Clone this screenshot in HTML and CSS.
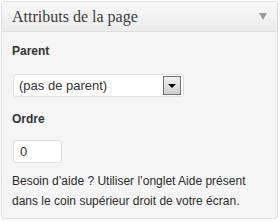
FILE: index.html
```html
<!DOCTYPE html>
<html lang="fr">
<head>
    <meta charset="UTF-8">
    <title>Attributs de la page</title>
    <link rel="stylesheet" href="styles.css">
</head>
<body>
    <div class="postbox">
        <div class="postbox-header">
            <h3 class="postbox-title">Attributs de la page</h3>
            <span class="toggle-arrow"></span>
        </div>
        <div class="inside">
            <p class="field-label">Parent</p>
            <div class="select-box">
                <span class="select-value">(pas de parent)</span>
                <span class="select-button"><span class="select-caret"></span></span>
            </div>
            <p class="field-label">Ordre</p>
            <input class="order-input" type="text" value="0">
            <p class="help-text">Besoin d&#8217;aide ? Utiliser l&#8217;onglet Aide présent dans le coin supérieur droit de votre écran.</p>
        </div>
    </div>
</body>
</html>
```
FILE: styles.css
```css
body {
    margin: 0;
    padding: 1px;
    background: #ffffff;
    font-family: 'Liberation Sans', Arial, sans-serif;
    font-size: 12px;
    color: #333333;
}

.postbox {
    width: 277px;
    height: 218px;
    box-sizing: border-box;
    border: 1px solid #dfdfdf;
    border-radius: 3px;
    background: #f5f5f5;
}

.postbox-header {
    display: flex;
    align-items: center;
    justify-content: space-between;
    height: 29px;
    padding: 0 10px;
    border-bottom: 1px solid #dfdfdf;
    background: linear-gradient(to bottom, #f9f9f9, #ececec);
}

.postbox-title {
    margin: 0;
    font-family: 'Liberation Serif', 'Times New Roman', serif;
    font-weight: normal;
    font-size: 16px;
    color: #3a3a3a;
}

.toggle-arrow {
    width: 0;
    height: 0;
    border-left: 4px solid transparent;
    border-right: 4px solid transparent;
    border-top: 7px solid #9a9a9a;
}

.inside {
    padding: 9px 10px 0 10px;
}

.field-label {
    margin: 0;
    line-height: 20px;
    font-weight: bold;
    color: #333333;
}

.select-box {
    display: flex;
    align-items: center;
    justify-content: space-between;
    width: 171px;
    height: 23px;
    margin: 13px 0 12px 1px;
    padding: 0 2px 0 5px;
    box-sizing: border-box;
    border: 1px solid #dfdfdf;
    border-radius: 3px;
    background: #ffffff;
    font-size: 13px;
    color: #333333;
}

.select-button {
    display: flex;
    align-items: center;
    justify-content: center;
    width: 16px;
    height: 17px;
    border: 1px solid #707070;
    background: linear-gradient(to bottom, #f2f2f2, #cfcfcf);
}

.select-caret {
    width: 0;
    height: 0;
    border-left: 4px solid transparent;
    border-right: 4px solid transparent;
    border-top: 4px solid #000000;
}

.order-input {
    display: block;
    width: 49px;
    height: 23px;
    margin: 11px 0 8px 1px;
    padding: 0 6px;
    box-sizing: border-box;
    border: 1px solid #dfdfdf;
    border-radius: 3px;
    background: #ffffff;
    font-family: 'Liberation Sans', Arial, sans-serif;
    font-size: 13px;
    color: #333333;
}

.help-text {
    margin: 0;
    line-height: 20px;
    font-size: 12px;
    color: #2a2a2a;
}
```
